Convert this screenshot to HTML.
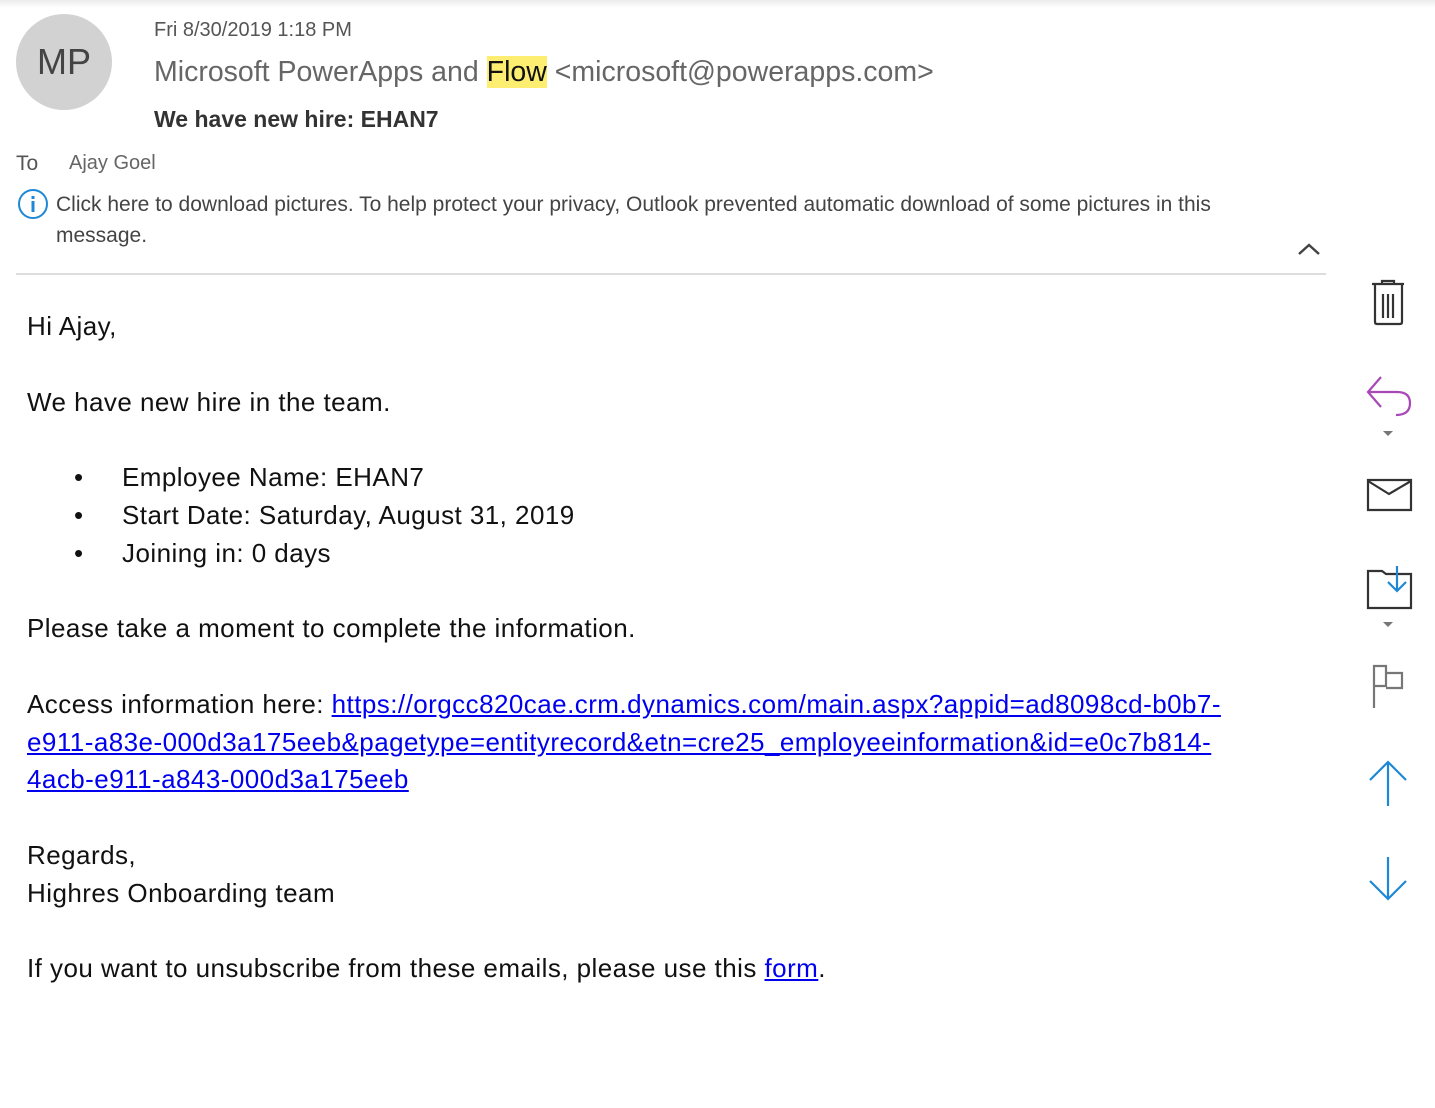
<!DOCTYPE html>
<html><head><meta charset="utf-8"><style>
body{margin:0;width:1435px;height:1108px;background:#fff;position:relative;overflow:hidden;font-family:"Liberation Sans",sans-serif}
.a{position:absolute;white-space:nowrap}
.b{font-size:26px;color:#111;letter-spacing:0.45px}
a{color:#0000ee;text-decoration:underline}
</style></head><body>
<div class="a" style="left:0;top:0;width:1435px;height:8px;background:linear-gradient(#ececec,#fff)"></div>
<div class="a" style="left:16px;top:14px;width:96px;height:96px;border-radius:50%;background:#d2d2d2;color:#444;font-size:36px;line-height:96px;text-align:center">MP</div>
<div class="a" style="left:154px;top:19px;font-size:20px;color:#555">Fri 8/30/2019 1:18 PM</div>
<div class="a" style="left:154px;top:56px;font-size:28.5px;color:#666">Microsoft PowerApps and <span style="background:#fdee72;color:#111">Flow</span> &lt;microsoft@powerapps.com&gt;</div>
<div class="a" style="left:154px;top:106px;font-size:23px;font-weight:bold;color:#333">We have new hire: EHAN7</div>
<div class="a" style="left:16px;top:152px;font-size:21px;color:#555">To</div>
<div class="a" style="left:69px;top:152px;font-size:20px;color:#666">Ajay Goel</div>
<svg class="a" style="left:17px;top:188px" width="32" height="32"><circle cx="16" cy="16" r="14" fill="none" stroke="#1e88d6" stroke-width="2"/><rect x="14.5" y="13" width="3" height="11" fill="#1e88d6"/><rect x="14.5" y="8" width="3" height="3" fill="#1e88d6"/></svg>
<div class="a" style="left:56px;top:193px;font-size:21px;color:#444">Click here to download pictures. To help protect your privacy, Outlook prevented automatic download of some pictures in this</div>
<div class="a" style="left:56px;top:224px;font-size:21px;color:#444">message.</div>
<svg class="a" style="left:1297px;top:241px" width="24" height="16"><path d="M2 13 L12 4 L22 13" fill="none" stroke="#444" stroke-width="2.5"/></svg>
<div class="a" style="left:16px;top:273px;width:1310px;height:2px;background:#ddd"></div>

<div class="a b" style="left:27px;top:311px">Hi Ajay,</div>
<div class="a b" style="left:27px;top:387px">We have new hire in the team.</div>
<div class="a b" style="left:74px;top:462px">•</div><div class="a b" style="left:122px;top:462px">Employee Name: EHAN7</div>
<div class="a b" style="left:74px;top:500px">•</div><div class="a b" style="left:122px;top:500px">Start Date: Saturday, August 31, 2019</div>
<div class="a b" style="left:74px;top:538px">•</div><div class="a b" style="left:122px;top:538px">Joining in: 0 days</div>
<div class="a b" style="left:27px;top:613px">Please take a moment to complete the information.</div>
<div class="a b" style="left:27px;top:689px">Access information here: <a>https://orgcc820cae.crm.dynamics.com/main.aspx?appid=ad8098cd-b0b7-</a></div>
<div class="a b" style="left:27px;top:727px"><a>e911-a83e-000d3a175eeb&amp;pagetype=entityrecord&amp;etn=cre25_employeeinformation&amp;id=e0c7b814-</a></div>
<div class="a b" style="left:27px;top:764px"><a>4acb-e911-a843-000d3a175eeb</a></div>
<div class="a b" style="left:27px;top:840px">Regards,</div>
<div class="a b" style="left:27px;top:878px">Highres Onboarding team</div>
<div class="a b" style="left:27px;top:953px">If you want to unsubscribe from these emails, please use this <a>form</a>.</div>

<svg class="a" style="left:1360px;top:278px" width="60" height="640">
<g fill="none" stroke="#333" stroke-width="2.2">
<path d="M12 6 H44 M22 6 V3 H34 V6 M15 7 V44 Q15 46 17 46 H40 Q42 46 42 44 V7 M23 16 V40 M28 16 V40 M33 16 V40"/>
<path d="M8 202 H51 V232 H8 Z M8 203 L29 216 L51 203"/>
<path d="M8 295 V330 H51 V296 H26 L22 293 H8 Z"/>
</g>
<path d="M21 99 L8 114 L21 129 M8 114 H37 Q50 114 50 125 Q50 137 36 137" fill="none" stroke="#a847b8" stroke-width="2.2"/>
<path d="M23 153 L28 158 L33 153 Z M23 344 L28 349 L33 344 Z" fill="#777"/>
<path d="M37 288 V312 M28 304 L37 313 L46 304" fill="none" stroke="#1e88d6" stroke-width="2.2"/>
<g fill="none" stroke="#777" stroke-width="2.2"><path d="M14 430 V388 H26 V408 H14 M26 395 H42 V410 H26"/></g>
<g fill="none" stroke="#1e88d6" stroke-width="2.2"><path d="M28 484 V528 M10 502 L28 484 L46 502"/><path d="M28 579 V621 M10 603 L28 621 L46 603"/></g>
</svg>
</body></html>
